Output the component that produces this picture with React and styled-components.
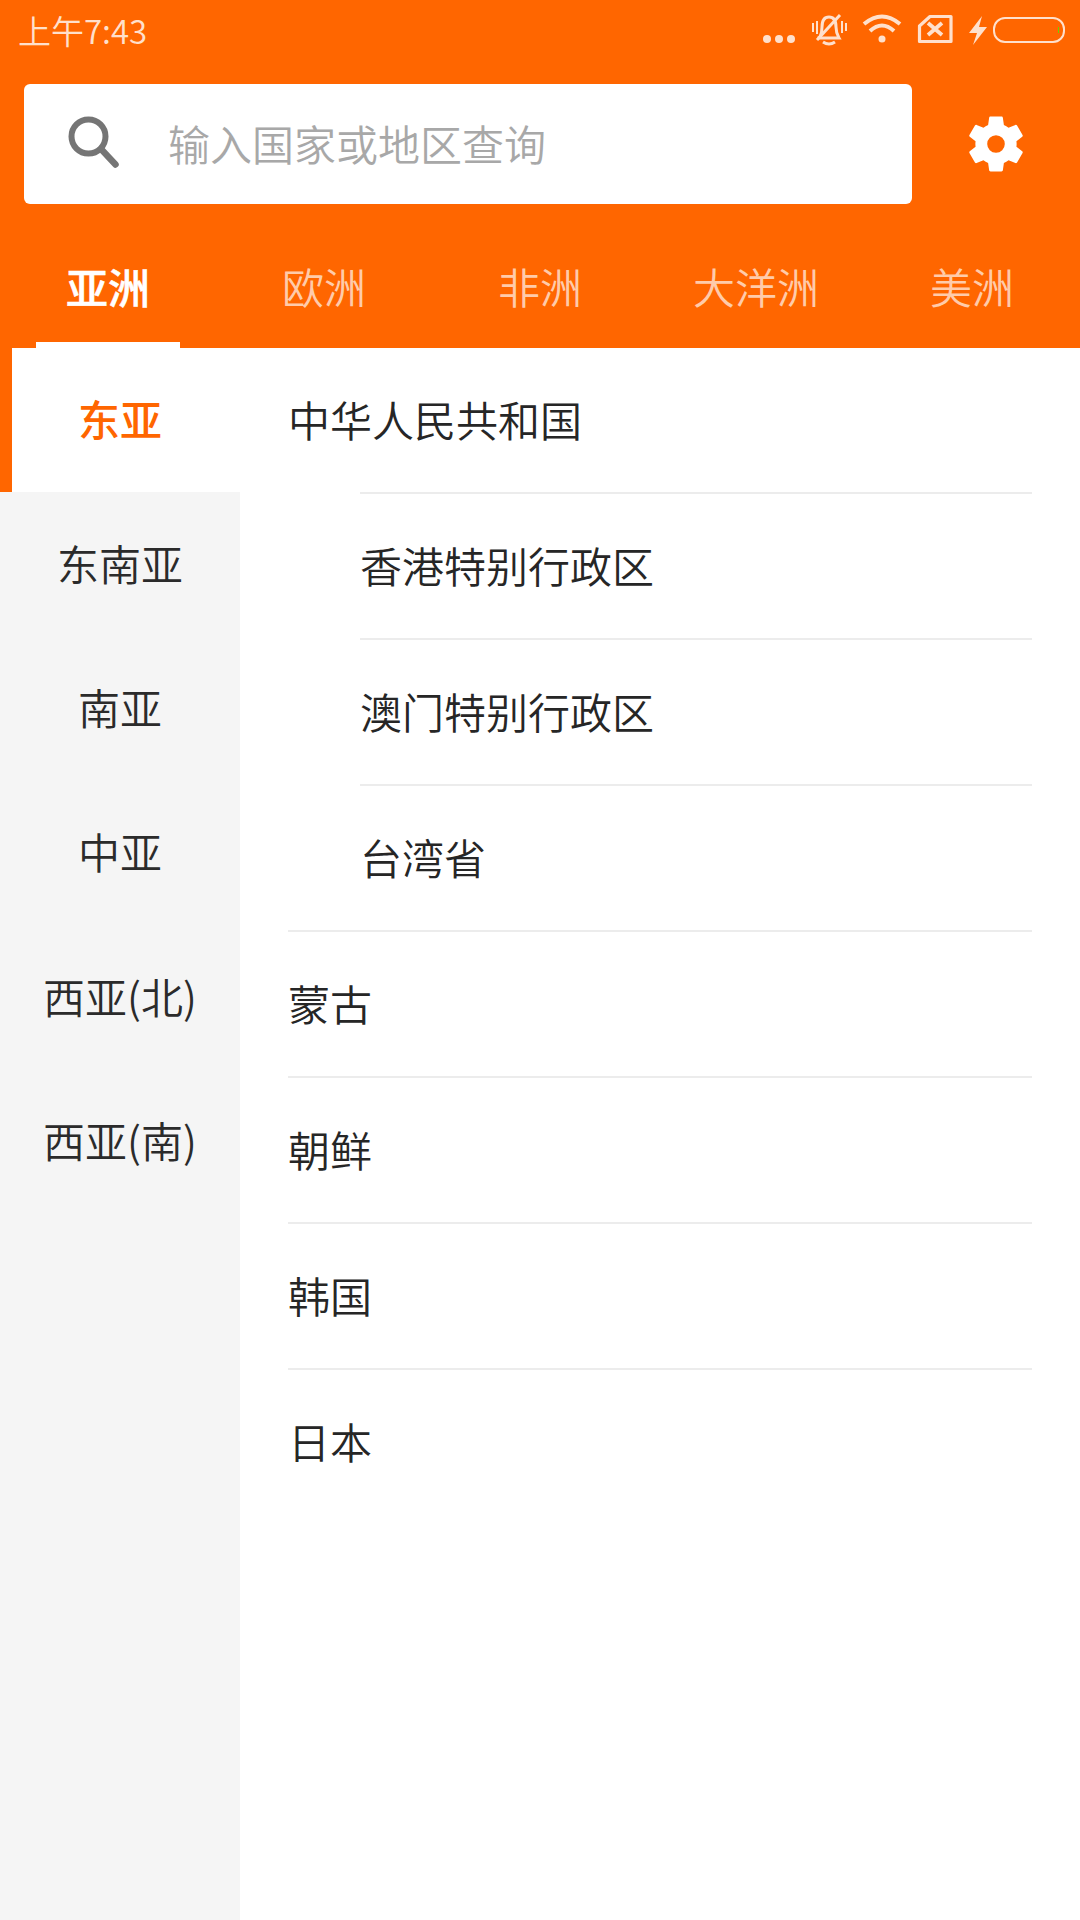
import React from 'react';
import styled, { createGlobalStyle } from 'styled-components';

const Global = createGlobalStyle`
  html, body { margin: 0; padding: 0; background: #fff; }
  * { box-sizing: border-box; }
  body { font-family: "Noto Sans CJK SC", "Noto Sans", sans-serif; font-weight: 350; }
`;
const Page = styled.div`
  width: 1080px; height: 1920px; overflow: hidden; display: flex; flex-direction: column; background: #fff;
`;
const Header = styled.header`
  background: #ff6600; height: 348px; flex: none; display: flex; flex-direction: column;
`;
const StatusBar = styled.div`
  height: 60px; display: flex; align-items: center; justify-content: space-between; padding-left: 18px;
  color: #ffe0cc;
`;
const Clock = styled.span`
  font-size: 33px; line-height: 60px;
`;
const StatusIcons = styled.div`
  width: 322px; height: 60px;
`;
const SearchRow = styled.div`
  display: flex; align-items: center; margin-top: 24px; height: 120px; padding-left: 24px;
`;
const SearchBox = styled.div`
  width: 888px; height: 120px; background: #fff; border-radius: 6px; display: flex; align-items: center; padding-left: 42px;
`;
const SearchIconWrap = styled.div`
  display: flex; margin-top: -4px;
`;
const Placeholder = styled.span`
  margin-left: 48px; font-size: 42px; color: #a8a8a8; line-height: 1; position: relative; top: -1px;
`;
const SettingsSlot = styled.div`
  flex: 1; display: flex; justify-content: center; align-items: center;
`;
const Tabs = styled.nav`
  display: flex; margin-top: 24px; height: 120px;
`;
const Tab = styled.div`
  position: relative; width: 216px; display: flex; justify-content: center; padding-top: 28px;
  font-size: 42px; line-height: 60px; height: 120px;
  color: ${p => (p.$active ? '#fff' : '#ffcbaa')};
  font-weight: ${p => (p.$active ? 500 : 350)};
  ${p => p.$active && `-webkit-text-stroke: 0.5px #fff; &::after { content: ""; position: absolute; left: 36px; width: 144px; bottom: 0; height: 6px; background: #fff; }`}
`;
const Body = styled.div`
  flex: 1; display: flex; min-height: 0;
`;
const Sidebar = styled.aside`
  width: 240px; flex: none; background: #f5f5f5;
`;
const SideItem = styled.div`
  height: 144.4px; display: flex; align-items: center; justify-content: center; font-size: 42px; padding-bottom: 5px;
  color: ${p => (p.$active ? '#ff6600' : '#2b2b2b')};
  font-weight: ${p => (p.$active ? 500 : 350)};
  background: ${p => (p.$active ? '#fff' : 'transparent')};
  ${p => p.$active && 'box-shadow: inset 12px 0 0 #ff6600;'}
`;
const List = styled.main`
  flex: 1; padding: 0 48px;
`;
const Row = styled.div`
  position: relative;
  height: 146px; display: flex; align-items: center; font-size: 42px; color: #262626;
  padding-left: ${p => (p.$sub ? '72px' : '0')};
  padding-bottom: 6px;
  ${p => !p.$first && `&::before { content: ""; position: absolute; left: ${p.$sub ? 72 : 0}px; right: 0; top: -2px; height: 2px; background: #ececec; }`}
`;

const Search = () => (
  <svg width="54" height="56" viewBox="0 0 54 56" fill="none" stroke="#757575">
    <circle cx="22.5" cy="22.5" r="17" strokeWidth="6" />
    <path d="M35 35 L49.5 50.5" strokeWidth="6.5" strokeLinecap="round" />
  </svg>
);
const Gear = () => (
  <svg width="66" height="66" viewBox="0 0 24 24" fill="#fff">
    <path fillRule="evenodd" d="M19.43 12.98c.04-.32.07-.64.07-.98s-.03-.66-.07-.98l2.11-1.65c.19-.15.24-.42.12-.64l-2-3.46c-.12-.22-.39-.3-.61-.22l-2.49 1c-.52-.4-1.08-.73-1.69-.98l-.38-2.65C14.46 2.18 14.25 2 14 2h-4c-.25 0-.46.18-.49.42l-.38 2.65c-.61.25-1.17.59-1.69.98l-2.49-1c-.23-.09-.49 0-.61.22l-2 3.46c-.13.22-.07.49.12.64l2.11 1.65c-.04.32-.07.65-.07.98s.03.66.07.98l-2.11 1.65c-.19.15-.24.42-.12.64l2 3.46c.12.22.39.3.61.22l2.49-1c.52.4 1.08.73 1.69.98l.38 2.65c.03.24.24.42.49.42h4c.25 0 .46-.18.49-.42l.38-2.65c.61-.25 1.17-.59 1.69-.98l2.49 1c.23.09.49 0 .61-.22l2-3.46c.12-.22.07-.49-.12-.64l-2.11-1.65zM12 15.2a3.2 3.2 0 1 1 0-6.4 3.2 3.2 0 0 1 0 6.4z" />
  </svg>
);
const StatusGlyphs = () => (
  <svg width="322" height="60" viewBox="0 0 322 60" fill="none" stroke="#ffe0cc" strokeWidth="2.5">
    <g fill="#ffe0cc" stroke="none">
      <circle cx="9" cy="39" r="4" /><circle cx="21" cy="39" r="4" /><circle cx="33" cy="39" r="4" />
    </g>
    {/* muted bell */}
    <path d="M62 37 Q64 33 64 27 Q64 17 71 17 Q78 17 78 27 Q78 33 81 38 H60 Z" strokeWidth="3" />
    <path d="M65 42 Q71 46 77 42" strokeWidth="3" />
    <path d="M59 40 L82 15" strokeWidth="3" />
    <path d="M55 23 V32 M59 21 V34 M84 21 V33 M88 23 V31" strokeWidth="2" />
    {/* wifi */}
    <path d="M106 24 Q124 9 142 24 M112 31 Q124 20 136 31" strokeWidth="4" />
    <circle cx="124" cy="39" r="3.5" fill="#ffe0cc" stroke="none" />
    {/* sim x */}
    <path d="M161.5 26 L172 16.5 H193 V41.5 H161.5 Z" strokeWidth="3.2" strokeLinejoin="round" />
    <path d="M170 23 L184 35 M184 23 L170 35" strokeWidth="3.8" />
    {/* bolt */}
    <path d="M224 16 L211 33 H219 L215 45 L229 27 H221 Z" fill="#ffe0cc" stroke="none" />
    {/* battery */}
    <rect x="236" y="18" width="70" height="24" rx="11" strokeWidth="2" />
    <rect x="300" y="27" width="1" height="6" fill="#6fd000" stroke="none" />
  </svg>
);

const tabs = ['亚洲', '欧洲', '非洲', '大洋洲', '美洲'];
const side = ['东亚', '东南亚', '南亚', '中亚', '西亚(北)', '西亚(南)'];
const rows = [
  ['中华人民共和国', false], ['香港特别行政区', true], ['澳门特别行政区', true], ['台湾省', true],
  ['蒙古', false], ['朝鲜', false], ['韩国', false], ['日本', false],
];

export default function App() {
  return (
    <Page>
      <Global />
      <Header>
        <StatusBar>
          <Clock>上午7:43</Clock>
          <StatusIcons><StatusGlyphs /></StatusIcons>
        </StatusBar>
        <SearchRow>
          <SearchBox>
            <SearchIconWrap><Search /></SearchIconWrap>
            <Placeholder>输入国家或地区查询</Placeholder>
          </SearchBox>
          <SettingsSlot><Gear /></SettingsSlot>
        </SearchRow>
        <Tabs>
          {tabs.map((t, i) => <Tab key={t} $active={i === 0}>{t}</Tab>)}
        </Tabs>
      </Header>
      <Body>
        <Sidebar>
          {side.map((s, i) => <SideItem key={s} $active={i === 0}>{s}</SideItem>)}
        </Sidebar>
        <List>
          {rows.map(([t, sub], i) => <Row key={t} $sub={sub} $first={i === 0}>{t}</Row>)}
        </List>
      </Body>
    </Page>
  );
}
